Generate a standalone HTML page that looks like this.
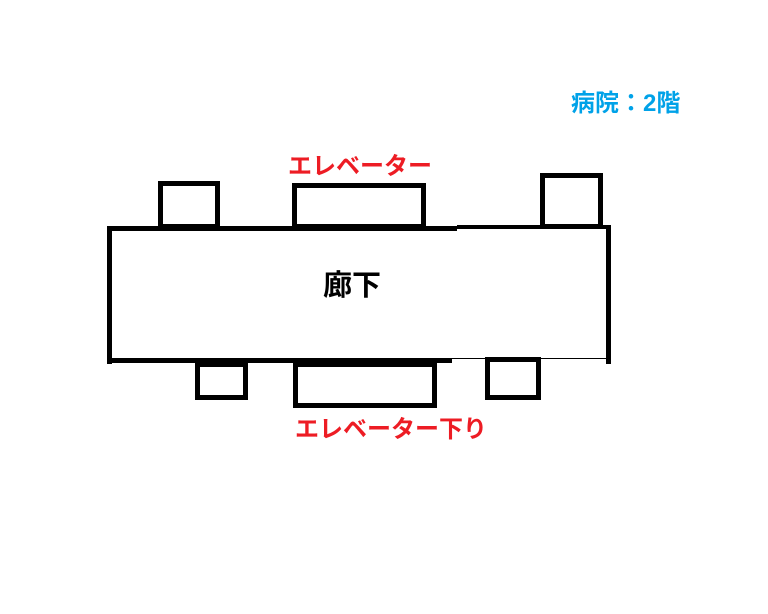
<!DOCTYPE html>
<html><head><meta charset="utf-8"><style>
body{margin:0;width:768px;height:614px;background:#fff;position:relative;overflow:hidden;font-family:"Liberation Sans","Noto Sans CJK JP",sans-serif;}
.b{position:absolute;border:5px solid #000;box-sizing:border-box;background:#fff}
.t{position:absolute;font-weight:bold;white-space:nowrap;line-height:1}
.l{position:absolute;background:#000}
</style></head><body>
<div class="b" style="left:107px;top:226px;width:504px;height:138px;border-top:none;border-bottom:none"></div>
<div class="l" style="left:107px;top:226px;width:350px;height:5px"></div>
<div class="l" style="left:457px;top:225px;width:154px;height:4px"></div>
<div class="l" style="left:107px;top:358px;width:345px;height:5px"></div>
<div class="l" style="left:452px;top:358px;width:159px;height:1px"></div>
<div class="b" style="left:158px;top:181px;width:62px;height:48px"></div>
<div class="b" style="left:292px;top:183px;width:134px;height:46px"></div>
<div class="b" style="left:540px;top:173px;width:63px;height:56px"></div>
<div class="b" style="left:195px;top:362px;width:53px;height:38px"></div>
<div class="b" style="left:293px;top:362px;width:144px;height:46px"></div>
<div class="b" style="left:485px;top:357px;width:56px;height:43px"></div>
<div class="t" style="left:288px;top:155px;font-size:24px;color:#ed1c24">エレベーター</div>
<div class="t" style="left:295px;top:418px;font-size:24px;color:#ed1c24">エレベーター下り</div>
<div class="t" style="left:323px;top:272px;font-size:29px;color:#000">廊下</div>
<div class="t" style="left:571px;top:92px;font-size:24px;color:#00a2e8">病院：2階</div>
</body></html>
